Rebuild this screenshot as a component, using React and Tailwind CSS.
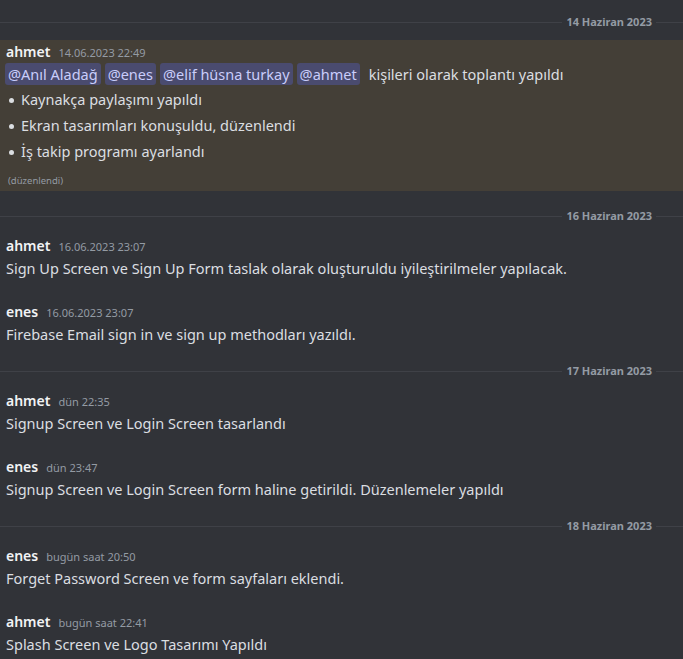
import React from 'react';

const days = [
  {
    date: '16 Haziran 2023',
    groups: [
      { name: 'ahmet', time: '16.06.2023 23:07', text: 'Sign Up Screen ve Sign Up Form taslak olarak oluşturuldu iyileştirilmeler yapılacak.' },
      { name: 'enes', time: '16.06.2023 23:07', text: 'Firebase Email sign in ve sign up methodları yazıldı.' },
    ],
  },
  {
    date: '17 Haziran 2023',
    groups: [
      { name: 'ahmet', time: 'dün 22:35', text: 'Signup Screen ve Login Screen tasarlandı' },
      { name: 'enes', time: 'dün 23:47', text: 'Signup Screen ve Login Screen form haline getirildi. Düzenlemeler yapıldı' },
    ],
  },
  {
    date: '18 Haziran 2023',
    groups: [
      { name: 'enes', time: 'bugün saat 20:50', text: 'Forget Password Screen ve form sayfaları eklendi.' },
      { name: 'ahmet', time: 'bugün saat 22:41', text: 'Splash Screen ve Logo Tasarımı Yapıldı' },
    ],
  },
];

// tarih ayırıcı çizgi
function DateDivider({ label, className }) {
  return (
    <div className={`flex items-center h-4 ${className}`}>
      <div className="flex-1 h-px bg-[#3f4147]" />
      <span className="px-1 text-[11px] font-bold text-[#949ba4]">{label}</span>
      <div className="w-[27px] h-px bg-[#3f4147]" />
    </div>
  );
}

function Header({ name, time }) {
  return (
    <div className="flex items-baseline h-[22px] leading-[22px] px-[6px]">
      <span className="text-[14px] font-semibold text-[#f2f3f5]">{name}</span>
      <span className="ml-[8px] text-[11px] text-[#949ba4]">{time}</span>
    </div>
  );
}

function Mention({ children }) {
  return (
    <span className="rounded-[3px] bg-[#4a4b6f] px-[3px] py-px text-[#c9cdfb] mr-[4px]">{children}</span>
  );
}

export default function App() {
  return (
    <div className="min-h-screen bg-[#313338] font-['Noto_Sans','Open_Sans',sans-serif] text-[#dbdee1] overflow-hidden">
      <DateDivider label="14 Haziran 2023" className="mt-[14px] mb-[10px]" />

      {/* mention edilen mesaj */}
      <div className="bg-[#443f37] pt-px pb-[3px]">
        <Header name="ahmet" time="14.06.2023 22:49" />
        <div className="h-[22px] leading-[22px] px-[5px] text-[14.5px] whitespace-nowrap">
          <Mention>@Anıl Aladağ</Mention>
          <Mention>@enes</Mention>
          <Mention>@elif hüsna turkay</Mention>
          <Mention>@ahmet</Mention>
          <span className="ml-[5px]">kişileri olarak toplantı yapıldı</span>
        </div>
        <ul className="mt-1 flex flex-col gap-1 text-[14.5px]">
          {['Kaynakça paylaşımı yapıldı', 'Ekran tasarımları konuşuldu, düzenlendi', 'İş takip programı ayarlandı'].map((t) => (
            <li key={t} className="flex items-center h-[22px]">
              <span className="w-[21px] flex justify-center pl-[2px]">
                <span className="w-[5px] h-[5px] rounded-full bg-[#dbdee1]" />
              </span>
              <span>{t}</span>
            </li>
          ))}
        </ul>
        <div className="mt-[11px] h-[14px] leading-[14px] px-[8px] text-[9.5px] text-[#949ba4]">(düzenlendi)</div>
      </div>

      {days.map((day, i) => (
        <div key={day.date}>
          <DateDivider label={day.date} className={i === 0 ? 'mt-[17px]' : 'mt-[18px]'} />
          <div className="mt-[11px] flex flex-col gap-[22px]">
            {day.groups.map((g) => (
              <div key={g.time}>
                <Header name={g.name} time={g.time} />
                <div className="h-[22px] leading-[22px] px-[6px] text-[14.5px] whitespace-nowrap">{g.text}</div>
              </div>
            ))}
          </div>
        </div>
      ))}
    </div>
  );
}
